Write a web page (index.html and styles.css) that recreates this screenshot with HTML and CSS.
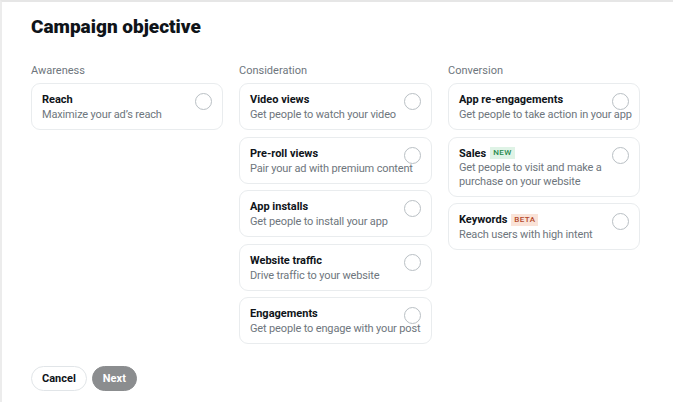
FILE: index.html
```html
<!DOCTYPE html>
<html>
<head>
<meta charset="utf-8">
<link rel="stylesheet" href="styles.css">
</head>
<body>
<div class="page">
  <h1 class="title">Campaign objective</h1>
  <div class="columns">
    <div class="col">
      <div class="col-label">Awareness</div>
      <div class="card"><div class="name">Reach</div><div class="desc">Maximize your ad’s reach</div><span class="radio"></span></div>
    </div>
    <div class="col">
      <div class="col-label">Consideration</div>
      <div class="card"><div class="name">Video views</div><div class="desc">Get people to watch your video</div><span class="radio"></span></div>
      <div class="card"><div class="name">Pre-roll views</div><div class="desc">Pair your ad with premium content</div><span class="radio"></span></div>
      <div class="card"><div class="name">App installs</div><div class="desc">Get people to install your app</div><span class="radio"></span></div>
      <div class="card"><div class="name">Website traffic</div><div class="desc">Drive traffic to your website</div><span class="radio"></span></div>
      <div class="card"><div class="name">Engagements</div><div class="desc">Get people to engage with your post</div><span class="radio"></span></div>
    </div>
    <div class="col">
      <div class="col-label">Conversion</div>
      <div class="card"><div class="name">App re-engagements</div><div class="desc">Get people to take action in your app</div><span class="radio"></span></div>
      <div class="card"><div class="name">Sales <span class="badge badge-new">NEW</span></div><div class="desc narrow">Get people to visit and make a purchase on your website</div><span class="radio"></span></div>
      <div class="card"><div class="name">Keywords <span class="badge badge-beta">BETA</span></div><div class="desc">Reach users with high intent</div><span class="radio"></span></div>
    </div>
  </div>
  <div class="actions">
    <button class="btn btn-cancel">Cancel</button>
    <button class="btn btn-next">Next</button>
  </div>
</div>
</body>
</html>
```
FILE: styles.css
```css
html, body { margin: 0; padding: 0; background: #fff; }
body {
  font-family: "Roboto", "Liberation Sans", sans-serif;
  color: #0f1419;
  width: 673px;
  height: 402px;
  box-sizing: border-box;
  border-top: 2px solid #e6e6e6;
  border-left: 2px solid #ececec;
  overflow: hidden;
}
.page { padding: 13px 0 0 29px; }
.title {
  margin: 0;
  font-size: 19px;
  font-weight: 900;
  line-height: 24px;
}
.columns {
  display: grid;
  grid-template-columns: 192px 193px 192px;
  column-gap: 16px;
  margin-top: 25px;
}
.col { display: flex; flex-direction: column; gap: 6.5px; }
.col-label {
  font-size: 11px;
  color: #6e767d;
  line-height: 14px;
  margin-bottom: -1.5px;
}
.card {
  position: relative;
  border: 1px solid #e9ecee;
  border-radius: 9px;
  padding: 8px 10px 7px 10px;
}
.name {
  font-size: 11px;
  font-weight: 700;
  line-height: 15px;
  display: flex;
  align-items: center;
  gap: 4px;
}
.desc {
  font-size: 11px;
  color: #6e767d;
  line-height: 15px;
  white-space: nowrap;
  letter-spacing: -0.15px;
}
.desc.narrow { white-space: normal; width: 150px; line-height: 14px; }
.radio {
  position: absolute;
  top: 9px;
  right: 10px;
  width: 15px;
  height: 15px;
  border: 1px solid #b9bfc4;
  border-radius: 50%;
  background: transparent;
}
.badge {
  font-size: 8px;
  font-weight: 500;
  padding: 1px 3px;
  line-height: 10px;
  letter-spacing: 0.4px;
}
.badge-new { background: #dff3e6; color: #1f8a4c; }
.badge-beta { background: #fae3d8; color: #b5482b; }
.actions {
  display: flex;
  gap: 5px;
  margin-top: 22px;
}
.btn {
  font-family: inherit;
  font-size: 11px;
  font-weight: 700;
  height: 25px;
  border-radius: 13px;
  padding: 0 10px;
  cursor: pointer;
}
.btn-cancel { background: #fff; border: 1px solid #e1e5e8; color: #0f1419; }
.btn-next { background: #8b8d8f; border: 1px solid #8b8d8f; color: #fff; }
```
